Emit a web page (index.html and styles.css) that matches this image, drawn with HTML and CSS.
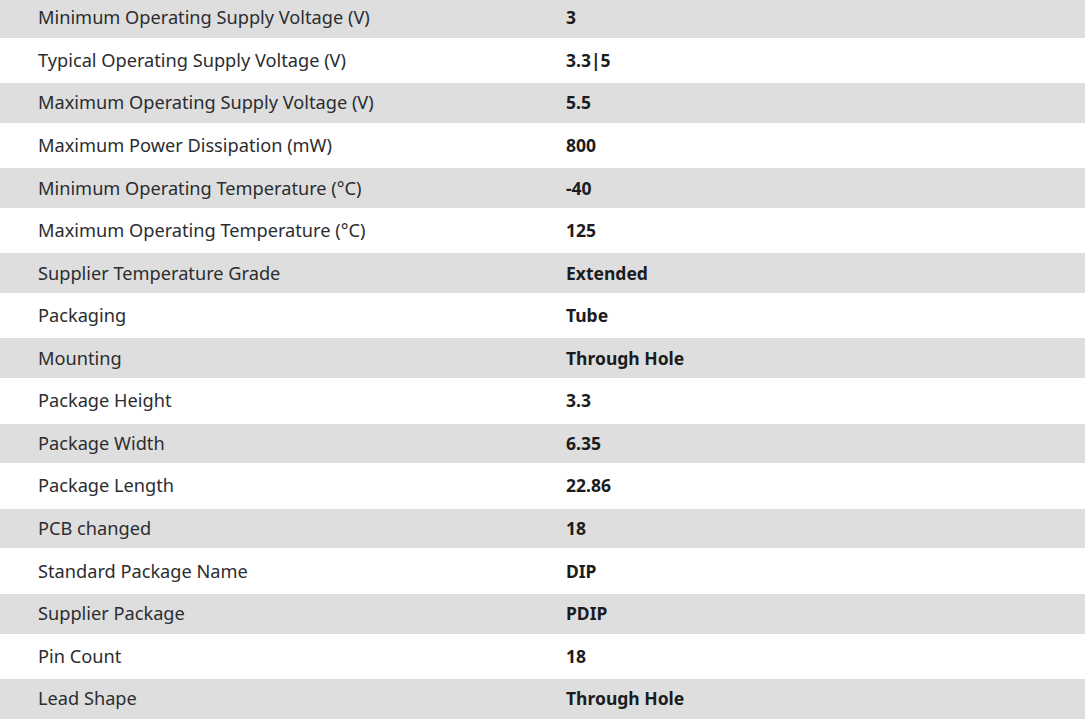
FILE: index.html
```html
<!DOCTYPE html>
<html>
<head>
<meta charset="utf-8">
<link rel="stylesheet" href="styles.css">
</head>
<body>
<div class="specs">
  <div class="row"><div class="label">Minimum Operating Supply Voltage (V)</div><div class="value">3</div></div>
  <div class="row"><div class="label">Typical Operating Supply Voltage (V)</div><div class="value">3.3|5</div></div>
  <div class="row"><div class="label">Maximum Operating Supply Voltage (V)</div><div class="value">5.5</div></div>
  <div class="row"><div class="label">Maximum Power Dissipation (mW)</div><div class="value">800</div></div>
  <div class="row"><div class="label">Minimum Operating Temperature (°C)</div><div class="value">-40</div></div>
  <div class="row"><div class="label">Maximum Operating Temperature (°C)</div><div class="value">125</div></div>
  <div class="row"><div class="label">Supplier Temperature Grade</div><div class="value">Extended</div></div>
  <div class="row"><div class="label">Packaging</div><div class="value">Tube</div></div>
  <div class="row"><div class="label">Mounting</div><div class="value">Through Hole</div></div>
  <div class="row"><div class="label">Package Height</div><div class="value">3.3</div></div>
  <div class="row"><div class="label">Package Width</div><div class="value">6.35</div></div>
  <div class="row"><div class="label">Package Length</div><div class="value">22.86</div></div>
  <div class="row"><div class="label">PCB changed</div><div class="value">18</div></div>
  <div class="row"><div class="label">Standard Package Name</div><div class="value">DIP</div></div>
  <div class="row"><div class="label">Supplier Package</div><div class="value">PDIP</div></div>
  <div class="row"><div class="label">Pin Count</div><div class="value">18</div></div>
  <div class="row"><div class="label">Lead Shape</div><div class="value">Through Hole</div></div>
</div>
</body>
</html>
```
FILE: styles.css
```css
html, body {
  margin: 0;
  padding: 0;
  background: #ffffff;
  overflow: hidden;
}
.specs {
  margin-top: -2.14px;
  display: flex;
  flex-direction: column;
  font-family: "Noto Sans", "Open Sans", sans-serif;
  font-size: 18.2px;
}
.row {
  display: grid;
  grid-template-columns: 528px 1fr;
  align-items: center;
  padding-left: 38px;
  padding-bottom: 1px;
  box-sizing: border-box;
  height: 45.34px;
  background: #ffffff;
}
.row:nth-child(odd) {
  height: 39.8px;
  background: #dedede;
}
.label {
  color: #2b2d31;
}
.value {
  color: #1a1c20;
  font-weight: 700;
  font-size: 17.5px;
}
```
